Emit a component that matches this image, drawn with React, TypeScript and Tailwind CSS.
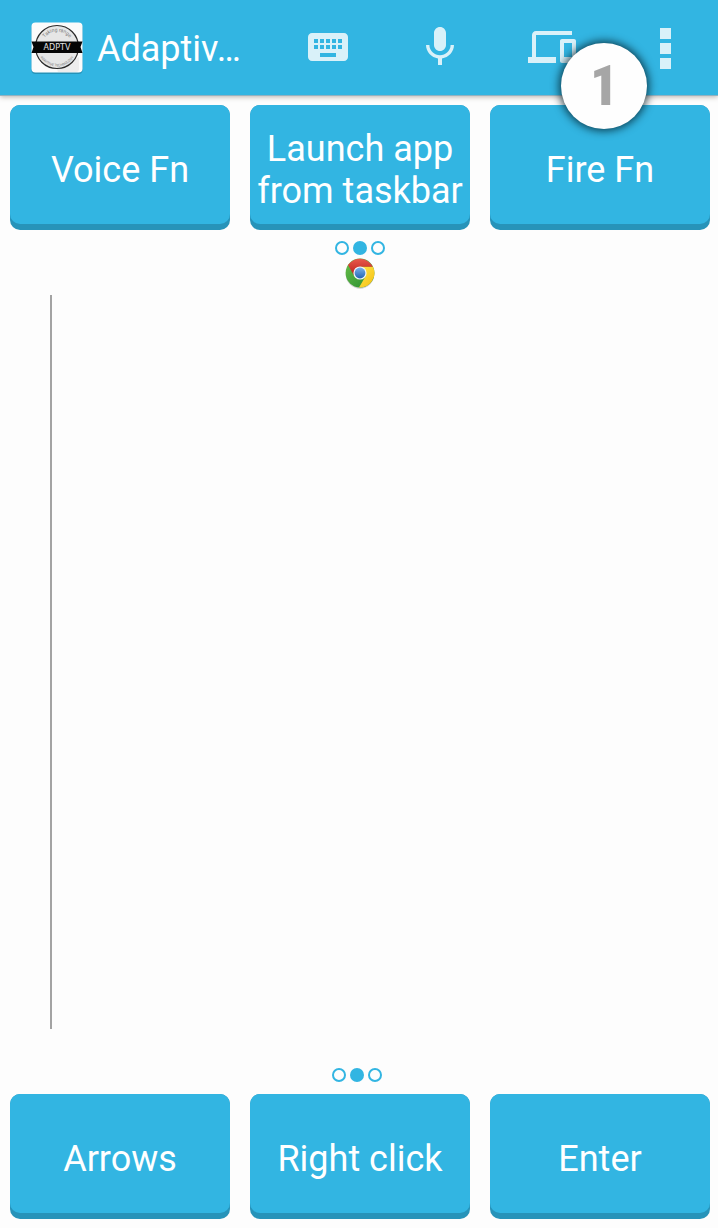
import type { ReactNode } from "react";

function AppLogo() {
  return (
    <svg viewBox="0 0 52 52" className="size-[52px] shrink-0" role="img" aria-label="ADPTV">
      <defs>
        <path id="logo-top" d="M10.500 25a15.500 15.500 0 0 1 31 0" />
        <path id="logo-bottom" d="M6.500 25a19.500 19.500 0 0 0 39 0" />
      </defs>
      <rect x="0.500" y="1.500" width="51" height="50.500" rx="4" fill="#1c7d9f" opacity="0.6" />
      <rect x="0.500" y="0.500" width="51" height="50" rx="4" fill="#fbfbfb" />
      <path d="M26 47l22-12v12q0 3-3 3H27z" fill="#ededed" />
      <circle cx="26" cy="25" r="21.500" fill="#e6e6e6" stroke="#2b2b2b" strokeWidth="1.200" />
      <text fontSize="5" fill="#777" fontFamily="Roboto, sans-serif">
        <textPath href="#logo-top" startOffset="50%" textAnchor="middle">Taking range</textPath>
      </text>
      <text fontSize="3.500" fill="#777" fontFamily="Roboto, sans-serif">
        <textPath href="#logo-bottom" startOffset="50%" textAnchor="middle">ADAPTIVE TECHNOLOGY</textPath>
      </text>
      <path d="M0.500 19.500h51l-2 5.500 2 6h-51l2-6z" fill="#050505" />
      <text x="26" y="28" textAnchor="middle" fontSize="8" fill="#e4e4e4" fontFamily="'DejaVu Sans', sans-serif">ADPTV</text>
    </svg>
  );
}

function ActionIcon({ label, path }: { label: string; path: string }) {
  return (
    <button type="button" aria-label={label} className="flex h-full w-28 shrink-0 items-center justify-center pb-px text-[#d9f1f9]">
      <svg viewBox="0 0 24 24" className="size-12" fill="currentColor" aria-hidden="true">
        <path d={path} />
      </svg>
    </button>
  );
}

const KEYBOARD =
  "M20 5H4c-1.100 0-2 .9-2 2v10c0 1.100.9 2 2 2h16c1.100 0 2-.9 2-2V7c0-1.100-.9-2-2-2zm-9 3h2v2h-2V8zm0 3h2v2h-2v-2zM8 8h2v2H8V8zm0 3h2v2H8v-2zm-1 2H5v-2h2v2zm0-3H5V8h2v2zm9 7H8v-2h8v2zm0-4h-2v-2h2v2zm0-3h-2V8h2v2zm3 3h-2v-2h2v2zm0-3h-2V8h2v2z";
const MIC =
  "M12 14c1.660 0 3-1.340 3-3V5c0-1.660-1.340-3-3-3S9 3.340 9 5v6c0 1.660 1.340 3 3 3zm5.300-3c0 3-2.540 5.100-5.300 5.100S6.700 14 6.700 11H5c0 3.410 2.720 6.230 6 6.720V21h2v-3.280c3.280-.48 6-3.300 6-6.720h-1.700z";
const DEVICES =
  "M4 6h18V4H4c-1.100 0-2 .9-2 2v11H0v3h14v-3H4V6zm19 2h-6c-.55 0-1 .45-1 1v10c0 .55.45 1 1 1h6c.55 0 1-.45 1-1V9c0-.55-.45-1-1-1zm-1 9h-4v-7h4v7z";

function Header() {
  return (
    <header className="relative flex h-24 items-center border-b border-[#93b2c0] bg-[#32b5e2] pl-[31px] shadow-[0_1px_5px_rgba(60,40,30,0.35)]">
      <AppLogo />
      <h1 className="ml-[14px] min-w-0 flex-1 truncate pt-0.5 text-4xl text-white">Adaptiv…</h1>
      <ActionIcon label="Keyboard" path={KEYBOARD} />
      <ActionIcon label="Voice input" path={MIC} />
      <ActionIcon label="Devices" path={DEVICES} />
      <button type="button" aria-label="More options" className="flex h-full w-[110px] shrink-0 flex-col items-center justify-center gap-1 pt-0.5 pl-1">
        <span className="size-[11px] bg-[#d9f1f9]" />
        <span className="size-[11px] bg-[#d9f1f9]" />
        <span className="size-[11px] bg-[#d9f1f9]" />
      </button>
      <span className="absolute top-[43px] right-[71px] flex size-[86px] items-center justify-center rounded-full bg-[#fefefe] font-['Roboto_Condensed','Roboto',sans-serif] text-[55px] leading-none font-black text-[#a6a6a6] shadow-[0_0_8px_2px_rgba(0,25,35,0.75)]">
        1
      </span>
    </header>
  );
}

function PadButton({ children }: { children: ReactNode }) {
  return (
    <button type="button" className="flex h-[125px] items-stretch rounded-[10px] bg-[#2793b9] pb-1.5 text-4xl leading-[42px] text-white">
      <span className="flex flex-1 items-center justify-center rounded-[10px] bg-[#32b5e2] pt-2.5">{children}</span>
    </button>
  );
}

function PadRow({ labels }: { labels: string[] }) {
  return (
    <div className="grid grid-cols-3 gap-5 pr-2 pl-2.5">
      {labels.map((label) => (
        <PadButton key={label}>{label}</PadButton>
      ))}
    </div>
  );
}

function PageDots() {
  return (
    <div className="flex justify-center gap-1">
      <span className="size-3.5 rounded-full border-2 border-[#32b5e2]" />
      <span className="size-3.5 rounded-full bg-[#32b5e2]" />
      <span className="size-3.5 rounded-full border-2 border-[#32b5e2]" />
    </div>
  );
}

function ChromeLogo() {
  return (
    <svg viewBox="0 0 32 32" className="size-8" aria-hidden="true">
      <defs>
        <linearGradient id="red" x1="0" y1="0" x2="0" y2="1">
          <stop offset="0" stopColor="#e8594c" />
          <stop offset="1" stopColor="#b91c17" />
        </linearGradient>
        <linearGradient id="green" x1="0" y1="0" x2="1" y2="1">
          <stop offset="0" stopColor="#6cc04a" />
          <stop offset="1" stopColor="#238b2f" />
        </linearGradient>
        <linearGradient id="yellow" x1="0" y1="0" x2="1" y2="1">
          <stop offset="0" stopColor="#ffe94a" />
          <stop offset="1" stopColor="#f5bd12" />
        </linearGradient>
        <linearGradient id="blue" x1="0" y1="0" x2="0" y2="1">
          <stop offset="0" stopColor="#78b2ea" />
          <stop offset="1" stopColor="#2464b4" />
        </linearGradient>
      </defs>
      <circle cx="16" cy="17.500" r="14.200" fill="#777" opacity="0.35" />
      <circle cx="16" cy="16" r="14.400" fill="url(#green)" />
      <path d="M16 9.500H28.800A14.400 14.400 0 0 1 15 30.400L21.600 19.200z" fill="url(#yellow)" />
      <path d="M4 8A14.400 14.400 0 0 1 28.800 9.700H16L10.400 19.300z" fill="url(#red)" />
      <circle cx="16" cy="16" r="6.600" fill="#f4f6f8" />
      <circle cx="16" cy="16" r="5.400" fill="url(#blue)" />
    </svg>
  );
}

export default function App() {
  return (
    <div className="flex min-h-screen flex-col bg-[#fdfdfd] pb-[9px] font-['Roboto',sans-serif]">
      <Header />
      <main className="flex flex-1 flex-col pt-[9px]">
        <PadRow labels={["Voice Fn", "Launch app from taskbar", "Fire Fn"]} />
        <div className="flex flex-col items-center pt-[11px] pl-0.5">
          <PageDots />
          <button type="button" aria-label="Chrome" className="mt-0.5">
            <ChromeLogo />
          </button>
        </div>
        <section aria-label="Touchpad" className="mt-1.5 mb-[39px] ml-[50px] flex-1 border-l-2 border-[#a3a3a3]" />
        <div className="pr-1 pb-3">
          <PageDots />
        </div>
        <PadRow labels={["Arrows", "Right click", "Enter"]} />
      </main>
    </div>
  );
}
